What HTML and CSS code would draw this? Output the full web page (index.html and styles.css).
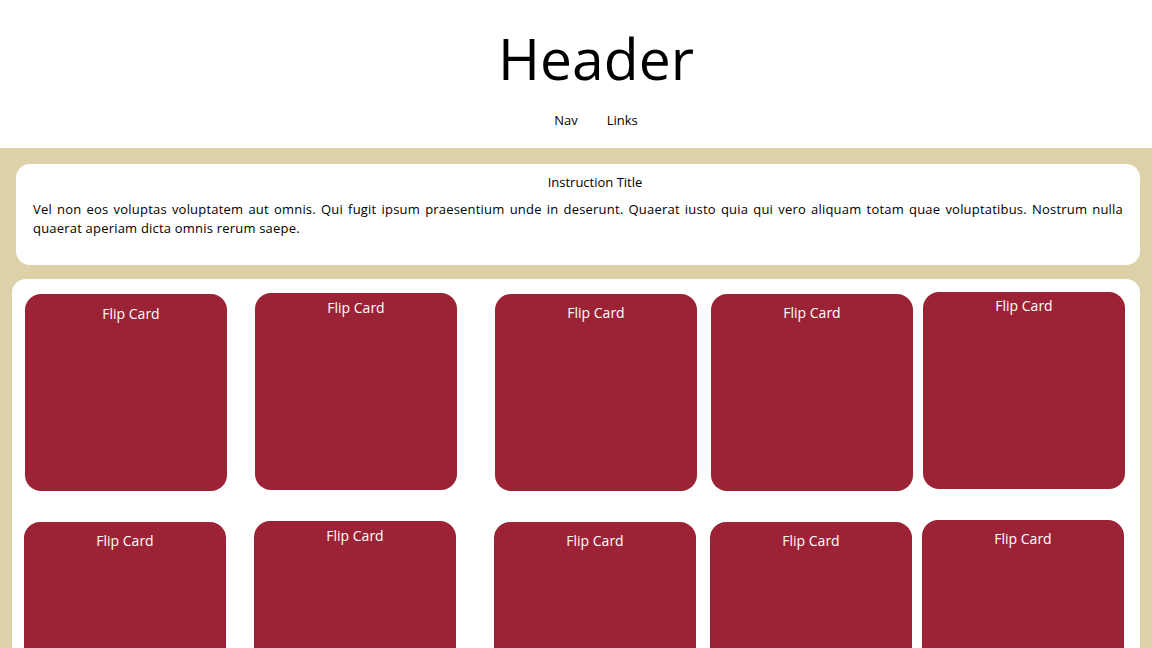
FILE: index.html
```
<!DOCTYPE html>
<html lang="en">
<head>
    <meta charset="UTF-8">
    <meta name="viewport" content="width=device-width, initial-scale=1.0">
    <title>Flip Cards</title>
    <link rel="stylesheet" href="styles.css">
</head>
<body>
    <header class="site-header">
        <h1>Header</h1>
        <nav class="nav">
            <a href="#">Nav</a>
            <a href="#">Links</a>
        </nav>
    </header>

    <main class="main">
        <section class="instructions">
            <h2>Instruction Title</h2>
            <p>Vel non eos voluptas voluptatem aut omnis. Qui fugit ipsum praesentium unde in deserunt. Quaerat iusto quia qui vero aliquam totam quae voluptatibus. Nostrum nulla quaerat aperiam dicta omnis rerum saepe.</p>
        </section>

        <section class="cards">
            <div class="card"><span>Flip Card</span></div>
            <div class="card"><span>Flip Card</span></div>
            <div class="card"><span>Flip Card</span></div>
            <div class="card"><span>Flip Card</span></div>
            <div class="card"><span>Flip Card</span></div>
            <div class="card"><span>Flip Card</span></div>
            <div class="card"><span>Flip Card</span></div>
            <div class="card"><span>Flip Card</span></div>
            <div class="card"><span>Flip Card</span></div>
            <div class="card"><span>Flip Card</span></div>
        </section>
    </main>
</body>
</html>
```

FILE: styles.css
```
body {
    margin: 0;
    font-family: "Open Sans", "Noto Sans", sans-serif;
    color: #000;
    background: #ddd1aa;
}
.site-header {
    background: #fff;
    height: 148px;
    padding-left: 40px;
    text-align: center;
    box-sizing: border-box;
}
.site-header h1 {
    margin: 0;
    padding-top: 18px;
    font-size: 57px;
    font-weight: normal;
    line-height: 80px;
}
.nav {
    display: flex;
    justify-content: center;
    gap: 29px;
    margin-top: 13px;
    font-size: 13px;
}
.nav a {
    color: #000;
    text-decoration: none;
}
.main {
    padding: 16px 12px 0 12px;
}
.instructions {
    background: #fff;
    border-radius: 14px;
    margin-left: 4px;
    padding: 9px 17px 27px 17px;
}
.instructions h2 {
    margin: 0;
    padding-left: 34px;
    font-size: 13px;
    font-weight: normal;
    line-height: 18px;
    text-align: center;
}
.instructions p {
    margin: 9px 0 0 0;
    font-size: 13px;
    line-height: 19px;
    letter-spacing: 0.2px;
    text-align: justify;
}
.cards {
    margin-top: 14px;
    background: #fff;
    border-radius: 14px 14px 0 0;
    padding: 15px 0 20px 13px;
    display: grid;
    grid-template-columns: 230px 240px 216px 212px 202px;
    row-gap: 31px;
}
.card {
    width: 202px;
    height: 197px;
    background: #9b2335;
    border-radius: 16px;
    color: #fff;
    font-size: 14px;
    text-align: center;
    padding-top: 9px;
    box-sizing: border-box;
}
.card:nth-child(n+6) {
    margin-left: -1px;
}
.card:nth-child(5n+2) {
    margin-top: -1px;
    padding-top: 5px;
}
.card:nth-child(5n) {
    margin-top: -2px;
    padding-top: 4px;
}
.card:nth-child(1) {
    padding-top: 10px;
    padding-left: 10px;
}
.card:nth-child(10) {
    padding-top: 9px;
}
```
